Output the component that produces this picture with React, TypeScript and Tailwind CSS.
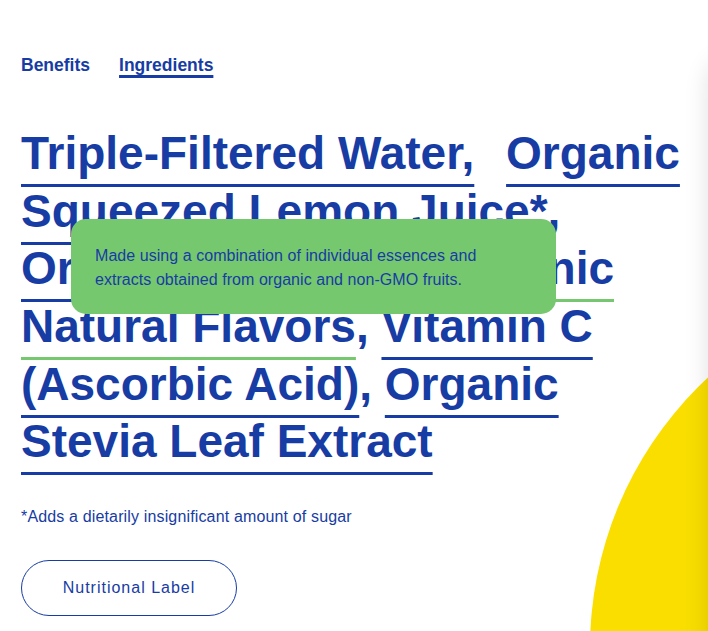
import React from 'react';

const BLUE = 'text-[#173ca4]';

function Item({ children, active = false, className = '' }: { children: React.ReactNode; active?: boolean; className?: string }) {
  return (
    <span
      className={`underline decoration-[3px] underline-offset-[15px] [text-decoration-skip-ink:none] ${
        active ? 'decoration-[#76c86f]' : 'decoration-[#173ca4]'
      } ${className}`}
    >
      {children}
    </span>
  );
}

export default function App() {
  return (
    <div className={`relative h-[631px] w-full overflow-hidden bg-white font-['Liberation_Sans',Arial,sans-serif] ${BLUE}`}>
      {/* lemon circle */}
      <div className="absolute left-[590px] top-[279px] h-[738px] w-[738px] rounded-full bg-[#f9de00]" />
      {/* panel edge just off screen */}
      <div className="absolute left-full top-[58px] h-[700px] w-[400px] rounded-3xl bg-white shadow-[0_0_24px_rgba(0,0,0,0.12)]" />

      <div className="relative px-[21px] pt-[52.6px]">
        {/* Tabs */}
        <nav className="flex gap-[29px] text-[17.5px] font-bold leading-6">
          <button className="cursor-pointer">Benefits</button>
          <button className="cursor-pointer underline decoration-[2.5px] underline-offset-[4px]">Ingredients</button>
        </nav>

        {/* Ingredients list */}
        <h2 className="mt-[48.7px] text-[46px] font-bold leading-[57.6px]">
          <Item>Triple-Filtered Water,</Item> <Item className="ml-[19px]">Organic<br />Squeezed Lemon Juice*</Item>,<br />
          <Item>Organic Citrus Oil</Item>, <Item active>Organic<br />Natural Flavors</Item>, <Item>Vitamin C<br />(Ascorbic Acid)</Item>,{' '}
          <Item>Organic<br />Stevia Leaf Extract</Item>
        </h2>

        <p className="mt-[34px] text-base leading-6 tracking-[0.15px]">*Adds a dietarily insignificant amount of sugar</p>

        <button className="mt-[31.2px] h-[56px] w-[216px] cursor-pointer rounded-full border border-[#173ca4] text-base tracking-[1px]">
          Nutritional Label
        </button>
      </div>

      {/* Tooltip */}
      <div className="absolute left-[71px] top-[219px] h-[95px] w-[485px] rounded-[15px] bg-[#76c86f] px-6 pt-[25px] text-base leading-6 tracking-[0.05px]">
        Made using a combination of individual essences and extracts obtained from organic and non-GMO fruits.
      </div>
    </div>
  );
}
